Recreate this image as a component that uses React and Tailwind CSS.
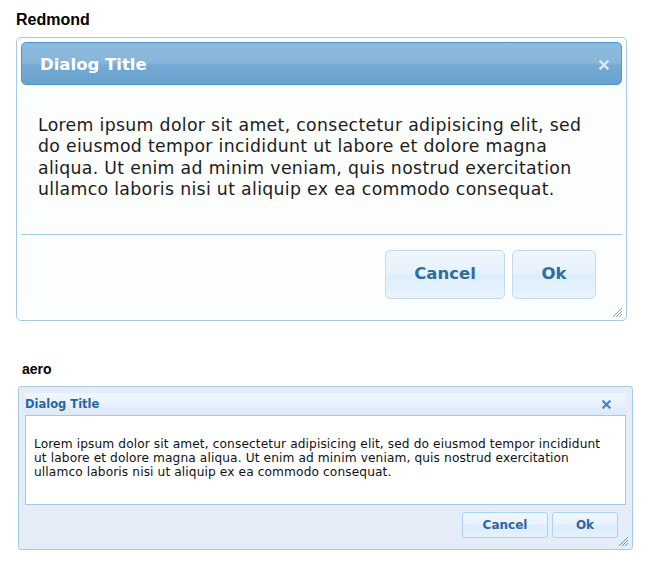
import React from "react";

function Grip({ color }) {
  return (
    <svg width="10" height="10" viewBox="0 0 10 10" className="block">
      <line x1="1" y1="10" x2="10" y2="1" stroke={color} strokeWidth="1" />
      <line x1="4" y1="10" x2="10" y2="4" stroke={color} strokeWidth="1" />
      <line x1="7" y1="10" x2="10" y2="7" stroke={color} strokeWidth="1" />
    </svg>
  );
}

function CloseX({ color, size = 9, sw = 2.6 }) {
  return (
    <svg width={size} height={size} viewBox="0 0 10 10" className="block">
      <path d="M1.5 1.5 L8.5 8.5 M8.5 1.5 L1.5 8.5" stroke={color} strokeWidth={sw} strokeLinecap="square" />
    </svg>
  );
}

export default function App() {
  return (
    <div className="w-[653px] h-[581px] bg-white overflow-hidden font-['Liberation_Sans',Arial,sans-serif]">
      <div className="ml-4 pt-[11px] text-[16px] leading-[18px] font-bold text-black">Redmond</div>

      {/* Redmond dialog */}
      <div className="relative ml-4 mt-2 w-[611px] h-[284px] rounded-[5px] border border-[#a6c9e2] bg-[#fcfdfd] p-1 flex flex-col font-['DejaVu_Sans',sans-serif]">
        <div className="h-[43px] rounded-[5px] border border-[#4a97d4] bg-[linear-gradient(to_bottom,#8dbbdd_0%,#87b6da_48%,#74aad4_54%,#69a2cf_100%)] flex items-center justify-between pl-[18px] pr-[12px] pt-[3px]">
          <span className="text-[16.5px] font-bold text-white leading-none">Dialog Title</span>
          <CloseX color="#dfe9f3" size={10} sw={2.4} />
        </div>
        <div className="h-[149px] pt-[30px] pl-[17px] text-[17.3px] leading-[21.3px] tracking-[0.33px] text-[#1c1c1c]">
          Lorem ipsum dolor sit amet, consectetur adipisicing elit, sed
          <br />
          do eiusmod tempor incididunt ut labore et dolore magna
          <br />
          aliqua. Ut enim ad minim veniam, quis nostrud exercitation
          <br />
          ullamco laboris nisi ut aliquip ex ea commodo consequat.
        </div>
        <div className="border-t border-[#a6c9e2] flex justify-end gap-[7px] pt-[15px] pr-[26px]">
          <button className="w-[120px] h-[49px] rounded-[5px] border border-[#c5dbec] bg-[linear-gradient(to_bottom,#eef6fd_0%,#e8f2fc_45%,#dceefb_52%,#eaf4fd_100%)] text-[16.5px] font-bold text-[#2e6e9e]">
            Cancel
          </button>
          <button className="w-[84px] h-[49px] rounded-[5px] border border-[#c5dbec] bg-[linear-gradient(to_bottom,#eef6fd_0%,#e8f2fc_45%,#dceefb_52%,#eaf4fd_100%)] text-[16.5px] font-bold text-[#2e6e9e]">
            Ok
          </button>
        </div>
        <div className="absolute right-[4px] bottom-[3px]">
          <Grip color="#6fa6d2" />
        </div>
      </div>

      <div className="ml-[22px] mt-[40px] text-[14px] leading-[16px] font-bold text-black">aero</div>

      {/* aero dialog */}
      <div className="relative ml-[18px] mt-[9px] w-[615px] h-[164px] rounded-[3px] border border-[#a7cae2] bg-[#e5eef8] px-[6px] pt-[6px] font-['DejaVu_Sans',sans-serif]">
        <div className="h-[22px] bg-[linear-gradient(to_bottom,#f0f6fd_0%,#e8f1fb_50%,#dde9f7_100%)] flex items-center justify-between pr-[15px] pt-[1px]">
          <span className="text-[11.5px] font-bold text-[#2665a0] leading-none">Dialog Title</span>
          <CloseX color="#3a88d2" size={9} sw={2.4} />
        </div>
        <div className="h-[90px] bg-white border border-[#a5c9e3] pt-[21px] pl-[8px] text-[12.2px] leading-[14px] tracking-[0.11px] text-[#111111]">
          Lorem ipsum dolor sit amet, consectetur adipisicing elit, sed do eiusmod tempor incididunt
          <br />
          ut labore et dolore magna aliqua. Ut enim ad minim veniam, quis nostrud exercitation
          <br />
          ullamco laboris nisi ut aliquip ex ea commodo consequat.
        </div>
        <div className="flex justify-end gap-[4px] pt-[7px] pr-[8px]">
          <button className="w-[86px] h-[26px] rounded-[3px] border border-[#a9d3f0] bg-[linear-gradient(to_bottom,#f0f7fe_0%,#e9f3fd_45%,#dcecfb_55%,#e6f1fc_100%)] text-[12px] font-bold text-[#2a689f]">
            Cancel
          </button>
          <button className="w-[66px] h-[26px] rounded-[3px] border border-[#a9d3f0] bg-[linear-gradient(to_bottom,#f0f7fe_0%,#e9f3fd_45%,#dcecfb_55%,#e6f1fc_100%)] text-[12px] font-bold text-[#2a689f]">
            Ok
          </button>
        </div>
        <div className="absolute right-[4px] bottom-[3px]">
          <Grip color="#5c9bd6" />
        </div>
      </div>
    </div>
  );
}
